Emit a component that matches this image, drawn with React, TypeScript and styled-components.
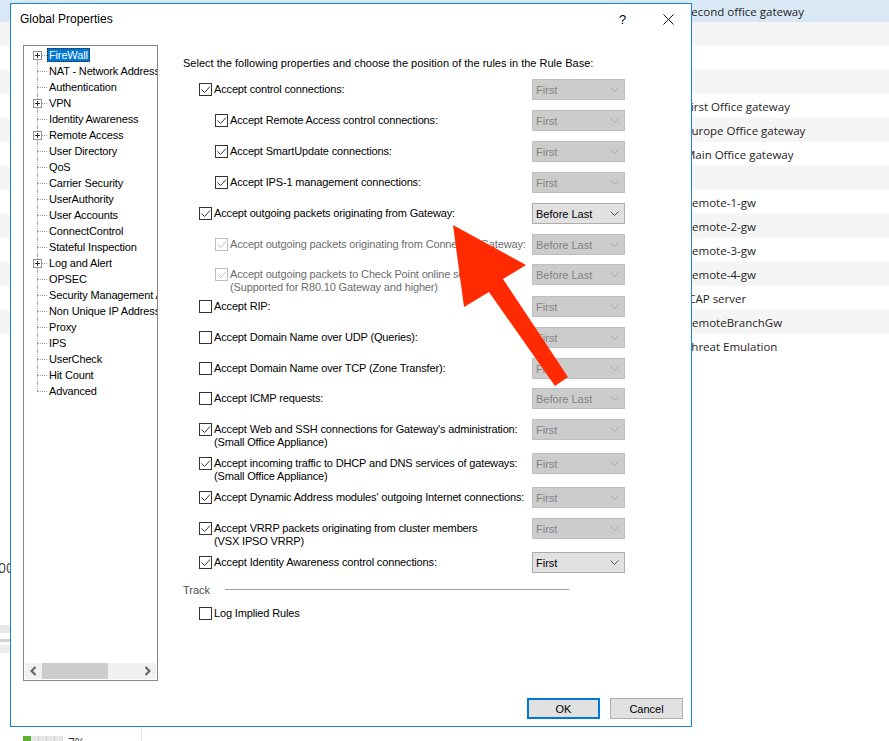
import React from "react";
import styled, { createGlobalStyle } from "styled-components";

const GlobalStyle = createGlobalStyle`
  html, body {
    margin: 0;
    padding: 0;
    background: #fff;
  }
  body {
    width: 889px;
    height: 741px;
    overflow: hidden;
    font-family: "Liberation Sans", Arial, sans-serif;
  }
`;

interface IRule {
  label: string;
  second?: string;
  checked: boolean;
  indent?: boolean;
  disabled?: boolean;
  value: string;
  selectEnabled?: boolean;
  h: number;
}

const backRows: [string, "sel" | "alt" | "plain", number][] = [
  ["Second office gateway", "sel", 22],
  ["", "alt", 24],
  ["", "plain", 24],
  ["", "alt", 24],
  ["First Office gateway", "plain", 24],
  ["Europe Office gateway", "alt", 24],
  ["Main Office gateway", "plain", 24],
  ["", "alt", 24],
  ["Remote-1-gw", "plain", 24],
  ["Remote-2-gw", "alt", 24],
  ["Remote-3-gw", "plain", 24],
  ["Remote-4-gw", "alt", 24],
  ["ICAP server", "plain", 24],
  ["RemoteBranchGw", "alt", 24],
  ["Threat Emulation", "plain", 24],
];

const treeItems = [
  { label: "FireWall", plus: true, selected: true },
  { label: "NAT - Network Address Translation" },
  { label: "Authentication" },
  { label: "VPN", plus: true },
  { label: "Identity Awareness" },
  { label: "Remote Access", plus: true },
  { label: "User Directory" },
  { label: "QoS" },
  { label: "Carrier Security" },
  { label: "UserAuthority" },
  { label: "User Accounts" },
  { label: "ConnectControl" },
  { label: "Stateful Inspection" },
  { label: "Log and Alert", plus: true },
  { label: "OPSEC" },
  { label: "Security Management Access" },
  { label: "Non Unique IP Address Ranges" },
  { label: "Proxy" },
  { label: "IPS" },
  { label: "UserCheck" },
  { label: "Hit Count" },
  { label: "Advanced" },
];

const rules: IRule[] = [
  { label: "Accept control connections:", checked: true, value: "First", h: 31 },
  { label: "Accept Remote Access control connections:", checked: true, indent: true, value: "First", h: 31 },
  { label: "Accept SmartUpdate connections:", checked: true, indent: true, value: "First", h: 31 },
  { label: "Accept IPS-1 management connections:", checked: true, indent: true, value: "First", h: 31 },
  { label: "Accept outgoing packets originating from Gateway:", checked: true, value: "Before Last", selectEnabled: true, h: 31 },
  { label: "Accept outgoing packets originating from Connected Gateway:", checked: true, indent: true, disabled: true, value: "Before Last", h: 30 },
  {
    label: "Accept outgoing packets to Check Point online services",
    second: "(Supported for R80.10 Gateway and higher)",
    checked: true,
    indent: true,
    disabled: true,
    value: "Before Last",
    h: 32,
  },
  { label: "Accept RIP:", checked: false, value: "First", h: 31 },
  { label: "Accept Domain Name over UDP (Queries):", checked: false, value: "First", h: 31 },
  { label: "Accept Domain Name over TCP (Zone Transfer):", checked: false, value: "First", h: 30 },
  { label: "Accept ICMP requests:", checked: false, value: "Before Last", h: 31 },
  {
    label: "Accept Web and SSH connections for Gateway's administration:",
    second: "(Small Office Appliance)",
    checked: true,
    value: "First",
    h: 34,
  },
  {
    label: "Accept incoming traffic to DHCP and DNS services of gateways:",
    second: "(Small Office Appliance)",
    checked: true,
    value: "First",
    h: 34,
  },
  { label: "Accept Dynamic Address modules' outgoing Internet connections:", checked: true, value: "First", h: 31 },
  {
    label: "Accept VRRP packets originating from cluster members",
    second: "(VSX IPSO VRRP)",
    checked: true,
    value: "First",
    h: 34,
  },
  { label: "Accept Identity Awareness control connections:", checked: true, value: "First", selectEnabled: true, h: 31 },
];

const CheckBox = (props: { checked: boolean; disabled?: boolean }) => {
  const color = props.disabled ? "#bcbcbc" : "#333";
  return (
    <Box $disabled={props.disabled}>
      {props.checked ? (
        <svg width="11" height="11" viewBox="0 0 11 11">
          <path d="M1.5 5.5 L4.5 8.5 L10 2.5" fill="none" stroke={color} strokeWidth="1" />
        </svg>
      ) : null}
    </Box>
  );
};

const Dropdown = (props: { value: string; enabled?: boolean }) => (
  <Select $enabled={props.enabled}>
    <span>{props.value}</span>
    <svg width="9" height="5" viewBox="0 0 9 5">
      <path d="M0.5 0.5 L4.5 4.5 L8.5 0.5" fill="none" stroke={props.enabled ? "#555" : "#a6a6a6"} strokeWidth="1" />
    </svg>
  </Select>
);

export default function App() {
  return (
    <Screen>
      <GlobalStyle />
      <Background>
        {backRows.map(([text, tone, h], i) => (
          <BackRow key={i} $tone={tone} $h={h}>
            {text}
          </BackRow>
        ))}
        <NumberFragment>00</NumberFragment>
        <BarsFragment>
          <Bar $h={8} $c="#e8e8e8" />
          <Bar $h={3} $c="#d2d2d2" $mt={6} />
          <Bar $h={8} $c="#ececec" $mt={3} />
        </BarsFragment>
        <StatusRow>
          <StatusLabel>
            <span>Connections:</span>
          </StatusLabel>
          <Progress>
            <ProgressFill style={{ width: "20%" }} />
          </Progress>
          <Percent>7%</Percent>
          <StatusDivider />
        </StatusRow>
      </Background>

      <Dialog>
        <TitleBar>
          <Title>Global Properties</Title>
          <HelpButton>?</HelpButton>
          <CloseButton>
            <svg width="11" height="11" viewBox="0 0 11 11">
              <path d="M0.5 0.5 L10.5 10.5 M10.5 0.5 L0.5 10.5" stroke="#111" strokeWidth="1" />
            </svg>
          </CloseButton>
        </TitleBar>

        <Body>
          <TreePanel>
            <TreeList>
              {treeItems.map((t, i) => (
                <TreeItem key={t.label} $first={i === 0} $last={i === treeItems.length - 1}>
                  {t.plus ? (
                    <Expander>
                      <svg width="9" height="9" viewBox="0 0 9 9">
                        <rect x="0.5" y="0.5" width="8" height="8" fill="#fff" stroke="#919191" />
                        <path d="M2 4.5 H7 M4.5 2 V7" stroke="#333" strokeWidth="1" />
                      </svg>
                    </Expander>
                  ) : null}
                  <TreeLabel $selected={t.selected}>{t.label}</TreeLabel>
                </TreeItem>
              ))}
            </TreeList>
            <HScroll>
              <ScrollArrow>
                <svg width="7" height="10" viewBox="0 0 7 10">
                  <path d="M5.5 1 L1.5 5 L5.5 9" fill="none" stroke="#606060" strokeWidth="2" />
                </svg>
              </ScrollArrow>
              <ScrollTrack>
                <ScrollThumb />
              </ScrollTrack>
              <ScrollArrow>
                <svg width="7" height="10" viewBox="0 0 7 10">
                  <path d="M1.5 1 L5.5 5 L1.5 9" fill="none" stroke="#606060" strokeWidth="2" />
                </svg>
              </ScrollArrow>
            </HScroll>
          </TreePanel>

          <Content>
            <Intro>Select the following properties and choose the position of the rules in the Rule Base:</Intro>
            <RuleList>
              {rules.map((r) => (
                <RuleRow key={r.label} $h={r.h}>
                  <RuleCheck $indent={r.indent} $disabled={r.disabled}>
                    <CheckBox checked={r.checked} disabled={r.disabled} />
                    <RuleText>
                      <span>{r.label}</span>
                      {r.second ? <span>{r.second}</span> : null}
                    </RuleText>
                  </RuleCheck>
                  <Dropdown value={r.value} enabled={r.selectEnabled} />
                </RuleRow>
              ))}
            </RuleList>
            <TrackRow>
              <TrackTitle>Track</TrackTitle>
              <TrackLine />
            </TrackRow>
            <LogRow>
              <CheckBox checked={false} />
              <span>Log Implied Rules</span>
            </LogRow>
          </Content>
        </Body>

        <Footer>
          <DialogButton $primary>OK</DialogButton>
          <DialogButton>Cancel</DialogButton>
        </Footer>
      </Dialog>

      <Arrow width="125" height="170" viewBox="0 0 125 170">
        <polygon points="3,5 76,45 53,59 118,157 105,166 39,72 14,87" fill="#ff2a00" />
      </Arrow>
    </Screen>
  );
}

const Screen = styled.div`
  position: relative;
  width: 889px;
  height: 741px;
  overflow: hidden;
  background: #fff;
`;

const Background = styled.div`
  display: flex;
  flex-direction: column;
  font-family: "Open Sans", "Noto Sans", sans-serif;
  color: #1e1e1e;
`;

const BackRow = styled.div<{ $tone: "sel" | "alt" | "plain"; $h: number }>`
  height: ${(p) => p.$h}px;
  display: flex;
  align-items: center;
  padding-left: 685px;
  font-size: 11.5px;
  white-space: nowrap;
  background: ${(p) => (p.$tone === "sel" ? "#d9e8f5" : p.$tone === "alt" ? "#f5f5f5" : "#fff")};
`;

const NumberFragment = styled.div`
  margin-top: 202px;
  margin-left: -2px;
  height: 16px;
  line-height: 16px;
  font-size: 14px;
  color: #444;
`;

const BarsFragment = styled.div`
  margin-top: 49px;
  width: 10px;
  display: flex;
  flex-direction: column;
`;

const Bar = styled.div<{ $h: number; $c: string; $mt?: number }>`
  height: ${(p) => p.$h}px;
  margin-top: ${(p) => p.$mt || 0}px;
  background: ${(p) => p.$c};
`;

const StatusRow = styled.div`
  margin-top: 74px;
  height: 14px;
  display: grid;
  grid-template-columns: 23px 45px 73px 1px;
  font-size: 12px;
`;

const StatusLabel = styled.div`
  width: 12px;
  display: flex;
  justify-content: flex-end;
  overflow: hidden;
  white-space: nowrap;
  padding-top: 8px;
`;

const Progress = styled.div`
  margin-top: 9px;
  width: 40px;
  height: 10px;
  background: repeating-linear-gradient(90deg, #e6e6e6 0 7px, #d6d6d6 7px 8px);
`;

const ProgressFill = styled.div`
  height: 100%;
  background: #5cb130;
`;

const Percent = styled.div`
  padding-top: 7px;
  color: #333;
`;

const StatusDivider = styled.div`
  background: #e3e3e3;
`;

const Dialog = styled.div`
  position: absolute;
  left: 10px;
  top: 3px;
  width: 682px;
  height: 724px;
  box-sizing: border-box;
  border: 1px solid #1883d7;
  background: #fff;
  display: flex;
  flex-direction: column;
  font-family: "Liberation Sans", Arial, sans-serif;
  font-size: 11px;
  color: #000;
`;

const TitleBar = styled.div`
  height: 30px;
  display: flex;
  align-items: center;
  flex-shrink: 0;
`;

const Title = styled.div`
  flex: 1;
  padding-left: 9px;
  font-size: 12px;
  color: #000;
`;

const HelpButton = styled.div`
  width: 45px;
  height: 30px;
  display: flex;
  align-items: center;
  justify-content: center;
  font-size: 13px;
`;

const CloseButton = styled.div`
  width: 46px;
  height: 30px;
  display: flex;
  align-items: center;
  justify-content: center;
`;

const Body = styled.div`
  flex: 1;
  display: flex;
  padding: 11px 0 0 12px;
`;

const TreePanel = styled.div`
  width: 135px;
  height: 636px;
  box-sizing: border-box;
  border: 1px solid #828790;
  display: flex;
  flex-direction: column;
  flex-shrink: 0;
`;

const TreeList = styled.ul`
  list-style: none;
  margin: 0;
  padding: 1px 0 0;
  flex: 1;
  overflow: hidden;
  white-space: nowrap;
  letter-spacing: -0.15px;
`;

const TreeItem = styled.li<{ $first?: boolean; $last?: boolean }>`
  position: relative;
  height: 16px;
  padding-left: 23px;

  &::before {
    content: "";
    position: absolute;
    left: 13px;
    top: 8px;
    width: 10px;
    border-top: 1px dotted #a0a0a0;
  }

  &::after {
    content: "";
    position: absolute;
    left: 13px;
    top: ${(p) => (p.$first ? 8 : 0)}px;
    height: ${(p) => (p.$first || p.$last ? 8 : 16)}px;
    border-left: 1px dotted #a0a0a0;
  }
`;

const Expander = styled.span`
  position: absolute;
  left: 9px;
  top: 4px;
  width: 9px;
  height: 9px;
  z-index: 1;
  display: flex;
`;

const TreeLabel = styled.span<{ $selected?: boolean }>`
  display: inline-block;
  margin-top: 1px;
  padding: 0 2px;
  height: 14px;
  line-height: 14px;
  background: ${(p) => (p.$selected ? "#0078d7" : "transparent")};
  color: ${(p) => (p.$selected ? "#fff" : "#000")};
  outline: ${(p) => (p.$selected ? "1px dotted #222" : "none")};
  outline-offset: -1px;
`;

const HScroll = styled.div`
  height: 16px;
  margin: 0 1px 1px;
  background: #f0f0f0;
  display: flex;
`;

const ScrollArrow = styled.div`
  width: 17px;
  display: flex;
  align-items: center;
  justify-content: center;
`;

const ScrollTrack = styled.div`
  flex: 1;
  display: flex;
`;

const ScrollThumb = styled.div`
  width: 66px;
  background: #cdcdcd;
`;

const Content = styled.div`
  flex: 1;
  margin-left: 25px;
  padding-top: 12px;
  display: flex;
  flex-direction: column;
`;

const Intro = styled.div`
  line-height: 13px;
  white-space: nowrap;
`;

const RuleList = styled.div`
  margin: 9px 0 0 16px;
  width: 426px;
  display: flex;
  flex-direction: column;
`;

const RuleRow = styled.div<{ $h: number }>`
  height: ${(p) => p.$h}px;
  display: grid;
  grid-template-columns: minmax(0, 1fr) 93px;
  align-items: start;
`;

const RuleCheck = styled.div<{ $indent?: boolean; $disabled?: boolean }>`
  display: flex;
  align-items: flex-start;
  min-width: 0;
  padding-top: 4px;
  padding-left: ${(p) => (p.$indent ? 16 : 0)}px;
  color: ${(p) => (p.$disabled ? "#6d6d6d" : "#000")};
`;

const Box = styled.span<{ $disabled?: boolean }>`
  width: 13px;
  height: 13px;
  box-sizing: border-box;
  flex-shrink: 0;
  margin-right: 2px;
  border: 1px solid ${(p) => (p.$disabled ? "#bcbcbc" : "#333")};
  background: #fff;
  display: flex;
  align-items: center;
  justify-content: center;
`;

const RuleText = styled.div`
  display: flex;
  flex-direction: column;
  line-height: 13px;
  white-space: nowrap;
  letter-spacing: -0.15px;
`;

const Select = styled.div<{ $enabled?: boolean }>`
  height: 21px;
  box-sizing: border-box;
  display: flex;
  align-items: center;
  justify-content: space-between;
  padding: 0 5px 0 3px;
  border: 1px solid ${(p) => (p.$enabled ? "#adadad" : "#bfbfbf")};
  background: ${(p) => (p.$enabled ? "#e1e1e1" : "#cccccc")};
  color: ${(p) => (p.$enabled ? "#000" : "#838383")};
`;

const TrackRow = styled.div`
  height: 13px;
  display: flex;
  align-items: center;
`;

const TrackTitle = styled.span`
  color: #4d4d4d;
  width: 42px;
`;

const TrackLine = styled.div`
  width: 344px;
  height: 1px;
  background: #a0a0a0;
`;

const LogRow = styled.div`
  margin: 11px 0 0 16px;
  display: flex;
  align-items: center;
  line-height: 13px;
  letter-spacing: -0.15px;
`;

const Footer = styled.div`
  display: flex;
  justify-content: flex-end;
  gap: 10px;
  padding: 0 8px 7px 0;
`;

const DialogButton = styled.div<{ $primary?: boolean }>`
  width: 73px;
  height: 21px;
  box-sizing: border-box;
  display: flex;
  align-items: center;
  justify-content: center;
  background: #e1e1e1;
  border: ${(p) => (p.$primary ? "2px solid #0078d7" : "1px solid #adadad")};
`;

const Arrow = styled.svg`
  position: absolute;
  left: 450px;
  top: 220px;
  pointer-events: none;
`;
